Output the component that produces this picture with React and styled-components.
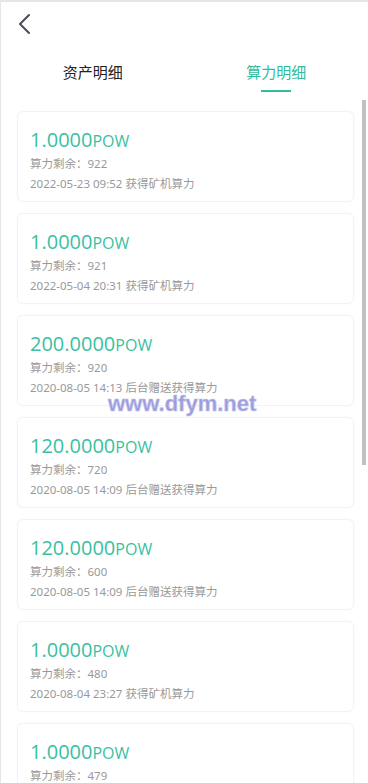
import React, { useState } from "react";
import styled, { createGlobalStyle } from "styled-components";

const GlobalStyle = createGlobalStyle`
  html, body {
    margin: 0;
    padding: 0;
    background: #fff;
  }
  body {
    font-family: "Noto Sans", "Noto Sans CJK SC", sans-serif;
  }
  * {
    box-sizing: border-box;
  }
`;

const Page = styled.div`
  position: relative;
  width: 368px;
  height: 783px;
  border-top: 2px solid #e6e6e6;
  border-left: 1px solid #e6e6e6;
  display: flex;
  flex-direction: column;
  overflow: hidden;
  background: #fff;
`;

const TopBar = styled.div`
  height: 43px;
  display: flex;
  align-items: center;
  padding-left: 12px;
`;

const BackButton = styled.button`
  width: 22px;
  height: 26px;
  padding: 0;
  border: 0;
  background: none;
  display: flex;
  align-items: center;
  justify-content: center;
  cursor: pointer;
`;

const Tabs = styled.div`
  height: 55px;
  display: grid;
  grid-template-columns: 1fr 1fr;
`;

const Tab = styled.div`
  position: relative;
  display: flex;
  align-items: center;
  justify-content: center;
  padding-bottom: 2px;
  font-size: 15px;
  font-family: "Noto Sans CJK SC", sans-serif;
  color: ${(p) => (p.$active ? "#33bb9e" : "#222")};
  cursor: pointer;

  &::after {
    content: "";
    display: ${(p) => (p.$active ? "block" : "none")};
    position: absolute;
    left: 50%;
    bottom: 8px;
    width: 30px;
    height: 2px;
    margin-left: -15px;
    background: #33bb9e;
  }
`;

const ListWrap = styled.div`
  position: relative;
  flex: 1;
  min-height: 0;
`;

const List = styled.div`
  height: 100%;
  overflow-y: auto;
  padding: 11px 0 43px;
  scrollbar-width: none;

  &::-webkit-scrollbar {
    display: none;
  }
`;

/* overlay scroll thumb, sized from the list while the page runs */
const Thumb = styled.div`
  position: absolute;
  right: 2px;
  width: 4px;
  background: #c1c1c1;
  pointer-events: none;
`;

const Card = styled.div`
  margin: 0 14px 11px 16px;
  padding: 14px 12px 7px;
  background: #fff;
  border-radius: 6px;
  border: 1px solid #f3f3f3;
  box-shadow: 0 0 3px rgba(0, 0, 0, 0.03);
`;

const Amount = styled.div`
  height: 28px;
  display: flex;
  align-items: baseline;
  color: #3abfa2;
  font-size: 20px;
  line-height: 28px;
  font-family: "Open Sans", "Noto Sans", sans-serif;
`;

const Unit = styled.span`
  font-size: 16px;
`;

const Meta = styled.div`
  font-size: 11.5px;
  line-height: 20px;
  color: #999;
  font-family: "Noto Sans", "Noto Sans CJK SC", sans-serif;
`;

const Watermark = styled.div`
  position: absolute;
  left: 107px;
  top: 389px;
  font-family: "Liberation Sans", sans-serif;
  font-weight: bold;
  font-size: 22px;
  color: #9c9cda;
  -webkit-text-stroke: 0.6px #c2c2ee;
  pointer-events: none;
`;

const records = [
  { amount: "1.0000", left: 922, time: "2022-05-23 09:52", note: "获得矿机算力" },
  { amount: "1.0000", left: 921, time: "2022-05-04 20:31", note: "获得矿机算力" },
  { amount: "200.0000", left: 920, time: "2020-08-05 14:13", note: "后台赠送获得算力" },
  { amount: "120.0000", left: 720, time: "2020-08-05 14:09", note: "后台赠送获得算力" },
  { amount: "120.0000", left: 600, time: "2020-08-05 14:09", note: "后台赠送获得算力" },
  { amount: "1.0000", left: 480, time: "2020-08-04 23:27", note: "获得矿机算力" },
  { amount: "1.0000", left: 479, time: "2020-08-03 22:15", note: "获得矿机算力" },
  { amount: "1.0000", left: 478, time: "2020-08-02 21:40", note: "获得矿机算力" },
  { amount: "1.0000", left: 477, time: "2020-08-01 20:06", note: "获得矿机算力" },
  { amount: "1.0000", left: 476, time: "2020-07-31 19:58", note: "获得矿机算力" },
  { amount: "1.0000", left: 475, time: "2020-07-30 18:33", note: "获得矿机算力" },
  { amount: "1.0000", left: 474, time: "2020-07-29 17:12", note: "获得矿机算力" },
];

const App = () => {
  const [tab, setTab] = useState(1);
  const [thumb, setThumb] = useState({ top: 0, height: 0 });

  const measure = (el) => {
    if (!el) return;
    const { scrollTop, scrollHeight, clientHeight } = el;
    if (scrollHeight <= clientHeight) return setThumb({ top: 0, height: 0 });
    const height = (clientHeight * clientHeight) / scrollHeight;
    const top = (scrollTop / (scrollHeight - clientHeight)) * (clientHeight - height);
    setThumb((t) => (t.top === top && t.height === height ? t : { top, height }));
  };

  return (
    <Page>
      <GlobalStyle />
      <TopBar>
        <BackButton aria-label="返回">
          <svg width="14" height="22" viewBox="0 0 14 22" fill="none">
            <polyline
              points="12,2 3,11 12,20"
              stroke="#4b4b5c"
              strokeWidth="2"
              strokeLinecap="round"
              strokeLinejoin="round"
            />
          </svg>
        </BackButton>
      </TopBar>

      <Tabs>
        <Tab $active={tab === 0} onClick={() => setTab(0)}>
          资产明细
        </Tab>
        <Tab $active={tab === 1} onClick={() => setTab(1)}>
          算力明细
        </Tab>
      </Tabs>

      <ListWrap>
        <List ref={measure} onScroll={(e) => measure(e.currentTarget)}>
          {records.map((r, i) => (
            <Card key={i}>
              <Amount>
                {r.amount}
                <Unit>POW</Unit>
              </Amount>
              <Meta>算力剩余：{r.left}</Meta>
              <Meta>
                {r.time} {r.note}
              </Meta>
            </Card>
          ))}
        </List>
        <Thumb style={{ top: thumb.top, height: thumb.height }} />
      </ListWrap>

      <Watermark>www.dfym.net</Watermark>
    </Page>
  );
};

export default App;
